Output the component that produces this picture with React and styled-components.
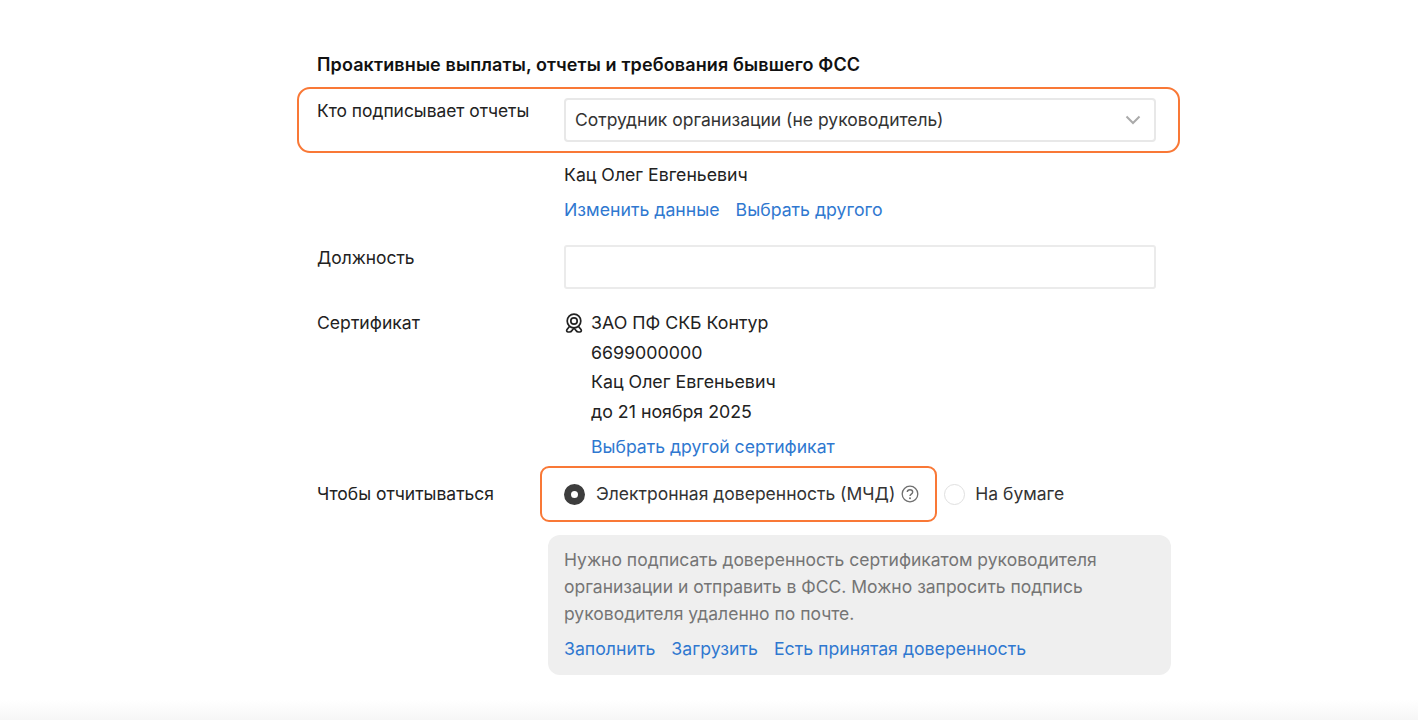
import styled, { createGlobalStyle } from "styled-components";

const GlobalStyle = createGlobalStyle`
  html, body {
    margin: 0;
    padding: 0;
    background: #fff;
  }
  body {
    font-family: Inter, "Noto Sans", "Liberation Sans", sans-serif;
    color: #222;
  }
`;

const App = () => {
  return (
    <Page>
      <GlobalStyle />
      <Form>
        <Title>Проактивные выплаты, отчеты и требования бывшего ФСС</Title>
        <SelectRow>
          <Label>Кто подписывает отчеты</Label>
          <Select>
            <span>Сотрудник организации (не руководитель)</span>
            <svg width="16" height="10" viewBox="0 0 16 10" fill="none">
              <path d="M1.5 1.5 8 8l6.5-6.5" stroke="#aaa" strokeWidth="2" />
            </svg>
          </Select>
          <Highlight />
        </SelectRow>
        <NameBlock>
          <div />
          <div>
            <Line>Кац Олег Евгеньевич</Line>
            <Links>
              <Link>Изменить данные</Link>
              <Link>Выбрать другого</Link>
            </Links>
          </div>
        </NameBlock>
        <InputRow>
          <Label>Должность</Label>
          <Input />
        </InputRow>
        <CertRow>
          <CertLabel>Сертификат</CertLabel>
          <Cert>
            <CertIcon viewBox="0 0 20 20" fill="none" stroke="#222" strokeWidth="1.7">
              <circle cx="10" cy="8" r="6.8" />
              <circle cx="10" cy="8" r="3.2" />
              <path d="M5.5 13.5 3 16.5c-.8 1-.2 2.5 1.2 2.5h1.2c1 0 2-.5 2.6-1.5L10 15l2 2.5c.6 1 1.6 1.5 2.6 1.5h1.2c1.4 0 2-1.5 1.2-2.5l-2.5-3" />
            </CertIcon>
            <CertLine>ЗАО ПФ СКБ Контур</CertLine>
            <CertLine>6699000000</CertLine>
            <CertLine>Кац Олег Евгеньевич</CertLine>
            <CertLine>до 21 ноября 2025</CertLine>
            <CertLink>Выбрать другой сертификат</CertLink>
          </Cert>
        </CertRow>
        <RadioRow>
          <RadioLabel>Чтобы отчитываться</RadioLabel>
          <Options>
            <Option>
              <Radio $checked />
              <OptionText>Электронная доверенность (МЧД)</OptionText>
              <svg width="18" height="18" viewBox="0 0 18 18" fill="none">
                <circle cx="9" cy="9" r="7.8" stroke="#6f6f6f" strokeWidth="1.3" />
                <path
                  d="M6.3 7.1c0-1.5 1.2-2.4 2.7-2.4s2.7.9 2.7 2.3c0 2.1-2.7 2-2.7 3.9"
                  stroke="#6f6f6f"
                  strokeWidth="1.4"
                />
                <circle cx="9" cy="13.3" r="1" fill="#6f6f6f" />
              </svg>
              <Highlight $small />
            </Option>
            <Option $second>
              <Radio />
              <OptionText>На бумаге</OptionText>
            </Option>
          </Options>
        </RadioRow>
        <Note>
          <NoteText>
            Нужно подписать доверенность сертификатом руководителя
            <br />
            организации и отправить в ФСС. Можно запросить подпись
            <br />
            руководителя удаленно по почте.
          </NoteText>
          <Links $note>
            <Link>Заполнить</Link>
            <Link>Загрузить</Link>
            <Link>Есть принятая доверенность</Link>
          </Links>
        </Note>
      </Form>
      <BottomFade />
    </Page>
  );
};
export default App;

const Page = styled.div`
  position: relative;
  height: 720px;
  overflow: hidden;
  background: #fff;
`;

const Form = styled.div`
  width: 854px;
  margin-left: 317px;
  padding-top: 53px;
  font-size: 17.5px;
  line-height: 24px;
`;

const Title = styled.div`
  font-weight: 600;
  font-size: 18px;
  letter-spacing: 0.12px;
  color: #111;
  margin-bottom: 21px;
`;

const Row = styled.div`
  display: grid;
  grid-template-columns: 247px 592px;
  position: relative;
`;

const SelectRow = styled(Row)`
  height: 44px;
  margin-bottom: 21px;
`;

const Label = styled.div`
  padding-top: 1px;
  font-size: 17.4px;
  color: #222;
`;

const CertLabel = styled(Label)`
  margin-top: -2px;
  font-size: 17.6px;
`;

const Select = styled.div`
  box-sizing: border-box;
  height: 44px;
  display: flex;
  align-items: center;
  justify-content: space-between;
  padding: 0 13px 0 9px;
  border: 2px solid #e8e8e8;
  border-radius: 4px;
  color: #333;
`;

const Highlight = styled.div`
  position: absolute;
  pointer-events: none;
  box-sizing: border-box;
  border: 2px solid #f97836;
  border-radius: ${(p) => (p.$small ? "9px" : "13px")};
  top: ${(p) => (p.$small ? "-16px" : "-11px")};
  left: ${(p) => (p.$small ? "-24px" : "-20px")};
  right: ${(p) => (p.$small ? "-18px" : "-9px")};
  bottom: ${(p) => (p.$small ? "-16px" : "-11px")};
`;

const NameBlock = styled(Row)`
  margin-bottom: 23px;
`;

const Line = styled.div`
  color: #222;
  font-size: 17.7px;
  margin-bottom: 11px;
`;

const Links = styled.div`
  display: flex;
  gap: 16px;
  font-size: 17.7px;
  margin-top: ${(p) => (p.$note ? "10px" : "0")};
`;

const Link = styled.a`
  color: #2f78d0;
  cursor: pointer;
`;

const InputRow = styled(Row)`
  height: 44px;
  margin-bottom: 23px;
`;

const Input = styled.div`
  box-sizing: border-box;
  height: 44px;
  border: 2px solid #ebebeb;
  border-radius: 3px;
`;

const CertRow = styled(Row)`
  margin-bottom: 23px;
`;

const Cert = styled.div`
  position: relative;
  margin-top: -1px;
  padding-left: 27px;
`;

const CertIcon = styled.svg`
  position: absolute;
  left: 0;
  top: 2px;
  width: 20px;
  height: 20px;
`;

const CertLine = styled.div`
  font-size: 17.8px;
  line-height: 29.5px;
  margin-top: -3px;
  margin-bottom: 3px;
`;

const CertLink = styled(Link)`
  display: block;
  font-size: 17.6px;
  margin-top: 9px;
`;

const RadioRow = styled.div`
  display: flex;
  align-items: center;
  height: 24px;
  margin-bottom: 29px;
`;

const RadioLabel = styled.div`
  width: 247px;
`;

const Options = styled.div`
  display: flex;
  align-items: center;
`;

const Option = styled.div`
  position: relative;
  display: flex;
  align-items: center;
  margin-left: ${(p) => (p.$second ? "25px" : "0")};
  gap: ${(p) => (p.$second ? "10px" : "11px")};
`;

const Radio = styled.span`
  box-sizing: border-box;
  width: 21px;
  height: 21px;
  border-radius: 50%;
  background: #fff;
  border: ${(p) => (p.$checked ? "7px solid #3d3d3d" : "1px solid #e0e0e0")};
`;

const OptionText = styled.span`
  color: #333;
  margin-right: -5px;
`;

const Note = styled.div`
  box-sizing: border-box;
  width: 623px;
  height: 140px;
  margin-left: 231px;
  padding: 11px 16px;
  border-radius: 12px;
  background: #efefef;
`;

const NoteText = styled.div`
  color: #757575;
  line-height: 27px;
`;

const BottomFade = styled.div`
  position: absolute;
  left: 0;
  right: 0;
  bottom: 0;
  height: 20px;
  background: linear-gradient(to bottom, #fff, #f6f6f6);
`;
